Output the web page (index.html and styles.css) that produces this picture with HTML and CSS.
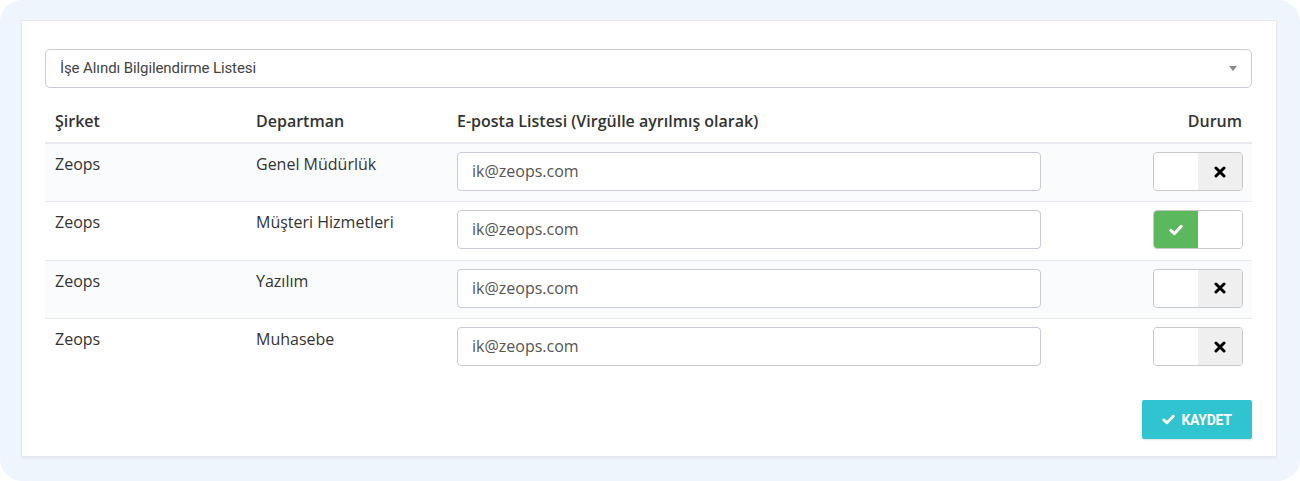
FILE: index.html
```html
<!DOCTYPE html>
<html lang="tr">
<head>
<meta charset="utf-8">
<link rel="stylesheet" href="styles.css">
</head>
<body>
<div class="frame">
  <div class="card">
    <div class="select">
      <span class="select-text">İşe Alındı Bilgilendirme Listesi</span>
      <span class="caret"></span>
    </div>
    <table class="tbl">
      <thead>
        <tr>
          <th class="c1">Şirket</th>
          <th class="c2">Departman</th>
          <th class="c3">E-posta Listesi (Virgülle ayrılmış olarak)</th>
          <th class="c4">Durum</th>
        </tr>
      </thead>
      <tbody>
        <tr class="odd">
          <td>Zeops</td><td>Genel Müdürlük</td>
          <td class="inp"><div class="input">ik@zeops.com</div></td>
          <td class="inp tog"><div class="toggle"><span class="half"></span><span class="half off"><svg viewBox="0 0 12 12" width="12" height="12"><path d="M2 2 L10 10 M10 2 L2 10" stroke="#000" stroke-width="3" stroke-linecap="round"/></svg></span></div></td>
        </tr>
        <tr>
          <td>Zeops</td><td>Müşteri Hizmetleri</td>
          <td class="inp"><div class="input">ik@zeops.com</div></td>
          <td class="inp tog"><div class="toggle"><span class="half on"><svg viewBox="0 0 14 12" width="14" height="12"><path d="M1.8 6.4 L5.3 9.6 L12.2 2.4" fill="none" stroke="#fff" stroke-width="3" stroke-linecap="round" stroke-linejoin="round"/></svg></span><span class="half"></span></div></td>
        </tr>
        <tr class="odd">
          <td>Zeops</td><td>Yazılım</td>
          <td class="inp"><div class="input">ik@zeops.com</div></td>
          <td class="inp tog"><div class="toggle"><span class="half"></span><span class="half off"><svg viewBox="0 0 12 12" width="12" height="12"><path d="M2 2 L10 10 M10 2 L2 10" stroke="#000" stroke-width="3" stroke-linecap="round"/></svg></span></div></td>
        </tr>
        <tr>
          <td>Zeops</td><td>Muhasebe</td>
          <td class="inp"><div class="input">ik@zeops.com</div></td>
          <td class="inp tog"><div class="toggle"><span class="half"></span><span class="half off"><svg viewBox="0 0 12 12" width="12" height="12"><path d="M2 2 L10 10 M10 2 L2 10" stroke="#000" stroke-width="3" stroke-linecap="round"/></svg></span></div></td>
        </tr>
      </tbody>
    </table>
    <div class="actions">
      <button class="btn"><svg viewBox="0 0 14 12" width="13" height="11"><path d="M1.8 6.4 L5.3 9.6 L12.2 2.4" fill="none" stroke="#fff" stroke-width="3" stroke-linecap="round" stroke-linejoin="round"/></svg><span>KAYDET</span></button>
    </div>
  </div>
</div>
</body>
</html>
```
FILE: styles.css
```css
* { box-sizing: border-box; }
html, body { margin: 0; padding: 0; background: #fff; }
body { width: 1300px; height: 481px; overflow: hidden; }
.frame {
  width: 1300px; height: 481px;
  background: #eef5fd;
  border-radius: 22px;
  padding: 20px 23px 21px 21px;
}
.card {
  background: #fff;
  border: 1px solid #e6e8ee;
  box-shadow: 0 2px 2px rgba(0,0,0,0.04);
  height: 437px;
  padding: 28px 24px 0 23px;
  font-family: "Open Sans", sans-serif;
  color: #333;
}
.select {
  height: 39px;
  border: 1px solid #c9cad8;
  border-radius: 5px;
  display: flex;
  align-items: center;
  justify-content: space-between;
  padding: 0 14px 2px 14px;
}
.select-text {
  font-family: Roboto, "Liberation Sans", sans-serif;
  font-size: 15px;
  color: #444;
  letter-spacing: -0.1px;
}
.caret {
  width: 0; height: 0;
  border-left: 4px solid transparent;
  border-right: 4px solid transparent;
  border-top: 5px solid #888;
  margin-top: 2px;
}
.tbl {
  width: 100%;
  border-collapse: collapse;
  margin-top: 12px;
  font-size: 16px;
}
.tbl th {
  text-align: left;
  font-weight: 600;
  padding: 10px 10px 10px;
  line-height: 22px;
  border-bottom: 2px solid #e7e9ee;
  color: #333;
}
.tbl th.c1, .tbl th.c2 { width: 201px; }
.tbl th.c4 { text-align: right; width: 201px; }
.tbl td {
  vertical-align: top;
  padding: 9px 10px 0;
  line-height: 22px;
  border-top: 1px solid #e7e9ee;
  height: 58.5px;
}
.tbl tr.odd td { background: #fafbfd; }
.tbl td.inp { padding: 8px 10px 0; }
.tbl td.tog { text-align: right; padding-right: 9px; }
.input {
  height: 39px;
  border: 1px solid #c9cad8;
  border-radius: 4px;
  background: #fff;
  padding: 0 14px;
  font-size: 16px;
  line-height: 37px;
  color: #555;
}
.toggle {
  display: inline-flex;
  width: 90px; height: 39px;
  border: 1px solid #c8c8c8;
  border-radius: 4px;
  overflow: hidden;
  vertical-align: top;
}
.half {
  flex: 1;
  display: flex;
  align-items: center;
  justify-content: center;
  background: #fff;
}
.half.off { background: #efefef; }
.half.on { background: #5cb85c; }
.actions {
  display: flex;
  justify-content: flex-end;
  margin-top: 23px;
}
.btn {
  width: 110px; height: 39px;
  border: none;
  border-radius: 2px;
  background: #2fc4cf;
  color: #fff;
  font-family: Roboto, "Liberation Sans", sans-serif;
  font-weight: 700;
  font-size: 14px;
  letter-spacing: -0.3px;
  display: flex;
  align-items: center;
  justify-content: center;
  gap: 6px;
  padding: 0;
  box-shadow: 0 1px 2px rgba(0,0,0,0.12);
}
```
